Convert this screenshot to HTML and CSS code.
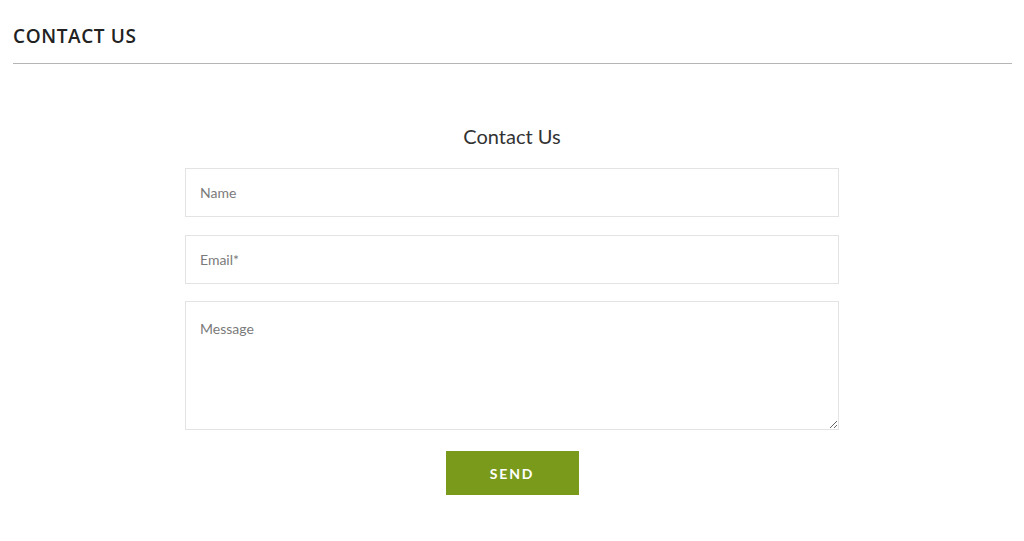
FILE: index.html
```html
<!DOCTYPE html>
<html>
<head>
<meta charset="utf-8">
<link rel="stylesheet" href="styles.css">
</head>
<body>
<header class="page-header">
  <h1 class="page-title">CONTACT US</h1>
</header>
<main class="content">
  <form class="contact-form">
    <h2 class="form-title">Contact Us</h2>
    <input class="field" type="text" placeholder="Name">
    <input class="field email" type="email" placeholder="Email*">
    <textarea class="field area" placeholder="Message"></textarea>
    <div class="actions">
      <button class="send" type="button">SEND</button>
    </div>
  </form>
</main>
</body>
</html>
```

FILE: styles.css
```css
* { box-sizing: border-box; }
html, body { margin: 0; padding: 0; background: #fff; }
body { font-family: Lato, "Open Sans", sans-serif; color: #333; }

.page-header {
  margin: 0 12px 0 13px;
  padding-top: 25px;
  height: 64px;
  border-bottom: 1px solid #b5b5b5;
}
.page-title {
  margin: 0;
  font-family: "Open Sans", sans-serif;
  font-weight: 600;
  font-size: 19px;
  line-height: 22px;
  color: #222;
  letter-spacing: 0.6px;
}

.content { display: flex; justify-content: center; padding-top: 59px; }
.contact-form {
  width: 654px;
  display: flex;
  flex-direction: column;
}
.form-title {
  margin: 0 0 19px;
  text-align: center;
  font-weight: 400;
  font-size: 20px;
  line-height: 26px;
  color: #333;
}
.field {
  display: block;
  width: 100%;
  height: 49px;
  margin: 0 0 18px;
  padding: 0 14px;
  border: 1px solid #e3e3e3;
  font-family: Lato, sans-serif;
  font-size: 14px;
  color: #333;
  background: #fff;
  outline: none;
}
.field.email { margin-bottom: 17px; }
.field::placeholder { color: #7a7a7a; }
.area {
  height: 129px;
  padding: 18px 14px;
  resize: vertical;
  margin-bottom: 21px;
}
.actions { display: flex; justify-content: center; }
.send {
  width: 133px;
  height: 44px;
  border: none;
  background: #7a9a1b;
  color: #fff;
  font-family: Lato, sans-serif;
  font-weight: 700;
  font-size: 14px;
  letter-spacing: 1.8px;
  cursor: pointer;
}
```
